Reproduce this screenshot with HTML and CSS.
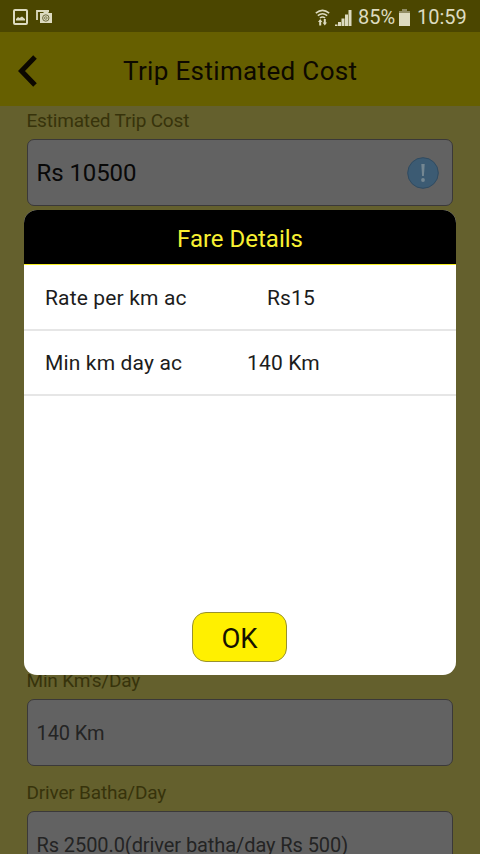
FILE: index.html
```html
<!DOCTYPE html>
<html lang="en">
<head>
<meta charset="utf-8">
<title>Trip Estimated Cost</title>
<link rel="stylesheet" href="styles.css">
</head>
<body>
<div class="screen">
  <div class="status">
    <svg class="picture" width="15" height="16" viewBox="0 0 15 16"><rect x="1" y="1" width="13" height="14" rx="1" fill="none" stroke="currentColor" stroke-width="2"/><path d="M3 11.500V10l2-2 1.500 1L9 7.500l3 2.500v1.500z" fill="currentColor"/></svg>
    <svg class="camera" width="17" height="14" viewBox="0 0 17 14"><path d="M1 10V1h12" fill="none" stroke="currentColor" stroke-width="1.800"/><path d="M4 3h3l1-1h4l1 1h3v10H4z" fill="currentColor"/><circle cx="9.800" cy="8" r="3.200" fill="none" stroke="#6b683a" stroke-width="1"/><circle cx="9.800" cy="8" r="1.300" fill="none" stroke="#6b683a" stroke-width=".8"/></svg>
    <svg class="wifi" width="15" height="17" viewBox="0 0 15 17"><g fill="none" stroke="currentColor" stroke-width="1.500"><path d="M.8 4.200Q7.500-1.400 14.200 4.200"/><path d="M2.800 6.700Q7.500 2.800 12.200 6.700"/><path d="M4.900 9Q7.500 7 10.100 9"/></g><path d="M5.200 10l2.200 3H6.200v3.500H4.200V13H3zM9.800 16.500l-2.200-3h1.200V10h2v3.500H12z" fill="currentColor"/></svg>
    <svg class="signal" width="17" height="17" viewBox="0 0 17 17" fill="currentColor"><path d="M0 15.500h2.500V17H0zM3 13h3v4H3zM6.500 9.500h3V17h-3zM10 5.500h3V17h-3zM13.500 1h3v16h-3z"/></svg>
    <span class="percent">85%</span>
    <svg class="battery" width="11" height="17" viewBox="0 0 11 17"><path d="M3 0h5v2h3v3H0V2h3z" fill="#918d64"/><path d="M0 4h11v13H0z" fill="currentColor"/></svg>
    <span class="clock">10:59</span>
  </div>
  <div class="header">
    <svg class="back" width="20" height="32" viewBox="0 0 20 32"><path d="M17 2L3.500 16 17 30" fill="none" stroke="#0c0800" stroke-width="5"/></svg>
    <h1 class="title">Trip Estimated Cost</h1>
  </div>
  <div class="form">
    <div class="field field-total">
      <div class="label">Estimated Trip Cost</div>
      <div class="box box-total"><span>Rs 10500</span>
        <svg class="info" width="32" height="32" viewBox="0 0 32 32"><circle cx="16" cy="16" r="15.300" fill="#3c5b73" stroke="#304b61"/><path d="M14.300 7h3.400l-.8 12h-1.800z" fill="#748792"/><circle cx="16" cy="23" r="1.900" fill="#748792"/></svg>
      </div>
    </div>
    <div class="field">
      <div class="label">Min Km's/Day</div>
      <div class="box"><span>140 Km</span></div>
    </div>
    <div class="field">
      <div class="label">Driver Batha/Day</div>
      <div class="box"><span>Rs 2500.0(driver batha/day Rs 500)</span></div>
    </div>
  </div>
  <div class="dialog">
    <div class="dialog-title">Fare Details</div>
    <div class="row"><span class="name">Rate per km ac</span><span class="amount">Rs15</span></div>
    <div class="row"><span class="name">Min km day ac</span><span class="amount km">140 Km</span></div>
    <button class="ok">OK</button>
  </div>
</div>
</body>
</html>
```
FILE: styles.css
```css
* { box-sizing: border-box; }
body { margin: 0; font-family: Roboto, "Liberation Sans", sans-serif; }
.screen { position: relative; width: 480px; height: 854px; overflow: hidden; background: #64602d; }
svg { display: block; flex: none; }
.status { display: flex; align-items: center; height: 32px; padding: 2px 14px 0 13px; background: #4b4600; color: #dddbc0; font-size: 20px; white-space: nowrap; }
.camera { margin-left: 8px; }
.wifi { margin-left: auto; }
.signal { margin-left: 5px; }
.percent { margin-left: 6px; width: 37px; }
.battery { margin-left: 4px; }
.clock { margin-left: 7px; width: 49px; }
.header { display: flex; align-items: center; height: 74px; padding: 3px 0 0 18px; background: #665f00; }
.title { margin: 0 0 0 85px; font-size: 26px; font-weight: 400; letter-spacing: .35px; color: #0d0900; white-space: nowrap; }
.form { padding: 0 27px 0 26.500px; }
.field { height: 112px; }
.field-total { height: 560px; }
.label { height: 33px; padding-top: 3px; font-size: 19px; line-height: 24px; letter-spacing: -.18px; color: #37330b; }
.box { display: flex; align-items: center; justify-content: space-between; height: 67px; padding: 1px 13px 0 9px; border: 1px solid #3b3939; border-radius: 7px; background: #626262; color: #242424; font-size: 20px; letter-spacing: -.08px; white-space: nowrap; }
.box-total { padding-bottom: 1px; color: #090909; font-size: 24px; }
.dialog { position: absolute; left: 24px; top: 210px; width: 432px; height: 465px; display: flex; flex-direction: column; border-radius: 13px; overflow: hidden; background: #fff; color: #1c1c1c; }
.dialog-title { display: flex; align-items: center; justify-content: center; height: 55px; padding-top: 3px; background: #000; border-bottom: 1px solid #f5ee22; color: #f8f032; font-size: 24px; }
.row { display: flex; align-items: center; height: 65.500px; padding: 2px 0 0 21px; border-bottom: 2px solid #e6e6e6; font-size: 21px; letter-spacing: .15px; white-space: nowrap; }
.name { width: 180px; }
.amount { width: 132px; text-align: center; }
.km { width: 117px; }
.ok { align-self: center; width: 95px; height: 50px; margin: auto 1px 13px 0; padding: 3px 0 0; border: 1px solid #98912f; border-radius: 14px; background: #fff000; color: #151200; font: 27.500px Roboto, "Liberation Sans", sans-serif; }
```
